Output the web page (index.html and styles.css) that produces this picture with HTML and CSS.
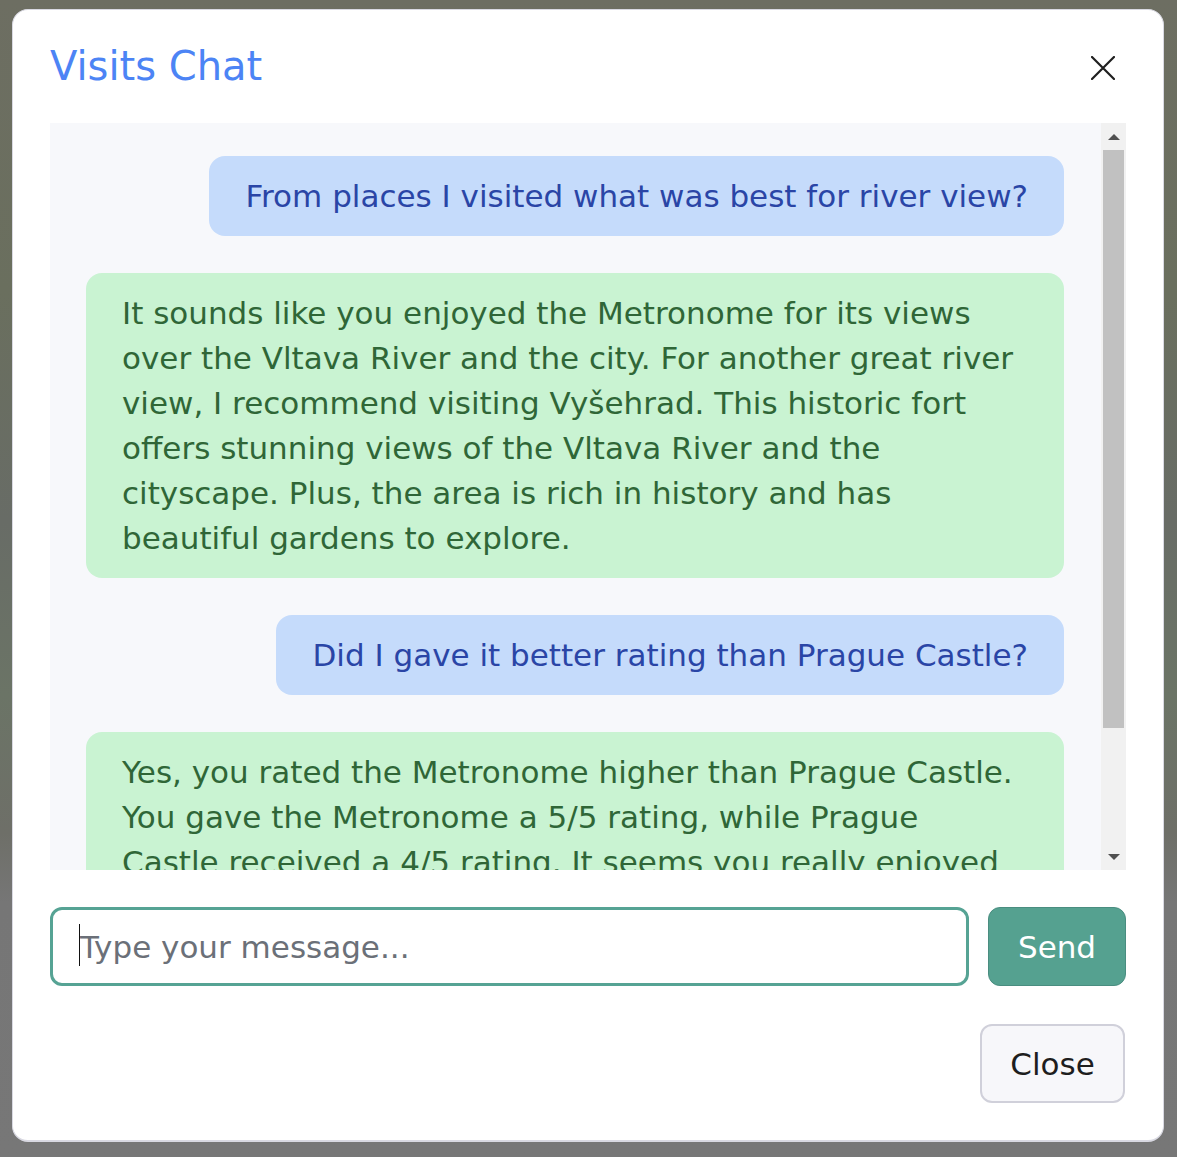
FILE: index.html
```html
<!DOCTYPE html>
<html lang="en">
<head>
<meta charset="utf-8">
<title>Visits Chat</title>
<link rel="stylesheet" href="styles.css">
</head>
<body>
<div class="backdrop">
  <div class="modal">
    <div class="modal-header">
      <h2 class="modal-title">Visits Chat</h2>
      <button class="icon-close" aria-label="Close">
        <svg width="24" height="24" viewBox="0 0 24 24"><path d="M1 1 L23 23 M23 1 L1 23" stroke="#1f1f1f" stroke-width="2.2" stroke-linecap="round" fill="none"/></svg>
      </button>
    </div>
    <div class="chat">
      <div class="messages">
        <div class="msg user">From places I visited what was best for river view?</div>
        <div class="msg bot">It sounds like you enjoyed the Metronome for its views over the Vltava River and the city. For another great river view, I recommend visiting Vyšehrad. This historic fort offers stunning views of the Vltava River and the cityscape. Plus, the area is rich in history and has beautiful gardens to explore.</div>
        <div class="msg user">Did I gave it better rating than Prague Castle?</div>
        <div class="msg bot">Yes, you rated the Metronome higher than Prague Castle. You gave the Metronome a 5/5 rating, while Prague Castle received a 4/5 rating. It seems you really enjoyed your visit to the Metronome and its wonderful views.</div>
      </div>
      <div class="scrollbar">
        <div class="sb-btn"><span class="tri-up"></span></div>
        <div class="sb-track"><div class="sb-thumb"></div></div>
        <div class="sb-btn"><span class="tri-down"></span></div>
      </div>
    </div>
    <div class="composer">
      <div class="composer-field">
        <input class="composer-input" type="text" placeholder="Type your message...">
        <span class="caret"></span>
      </div>
      <button class="btn-send">Send</button>
    </div>
    <div class="modal-footer">
      <button class="btn-close">Close</button>
    </div>
  </div>
</div>
</body>
</html>
```
FILE: styles.css
```css
* { box-sizing: border-box; }
html, body { margin: 0; padding: 0; }
body {
  font-family: "DejaVu Sans", "Liberation Sans", sans-serif;
  width: 1177px;
  height: 1157px;
  overflow: hidden;
  background: linear-gradient(180deg, #6d6e62 0%, #6a6f5e 25%, #686c66 45%, #6b7466 60%, #6e6f68 72%, #767676 78%, #777777 100%);
}
.backdrop {
  padding: 9px 13px 15px 12px;
}
.modal {
  background: #ffffff;
  border: 1px solid #d9d9e2;
  border-bottom-width: 2px;
  border-radius: 16px;
  height: 1133px;
  padding: 32px 37px 37px 37px;
  display: flex;
  flex-direction: column;
}
.modal-header {
  display: flex;
  align-items: center;
  justify-content: space-between;
  height: 48px;
  margin-bottom: 33px;
}
.modal-title {
  margin: 0;
  font-weight: normal;
  font-size: 40px;
  line-height: 48px;
  color: #4c84f5;
}
.icon-close {
  border: 0;
  background: transparent;
  padding: 0;
  margin: 4px 11px 0 0;
  width: 24px;
  height: 24px;
  display: flex;
}
.chat {
  height: 747px;
  background: #f7f8fb;
  display: flex;
  overflow: hidden;
}
.messages {
  flex: 1;
  overflow: hidden;
  padding: 33px 37px 0 36px;
  display: flex;
  flex-direction: column;
  gap: 37px;
}
.msg {
  font-size: 31px;
  line-height: 45px;
  padding: 17.5px 36px;
  border-radius: 16px;
  flex-shrink: 0;
}
.msg.user {
  align-self: flex-end;
  background: #c5dbfb;
  color: #2a45a6;
}
.msg.bot {
  background: #c9f3d2;
  color: #2f6637;
  padding-right: 42px;
}
.scrollbar {
  width: 25px;
  background: #f1f1f1;
  display: flex;
  flex-direction: column;
}
.sb-btn {
  height: 25px;
  display: flex;
  align-items: center;
  justify-content: center;
}
.sb-track {
  flex: 1;
  padding: 2px 2px 0 2px;
}
.sb-thumb {
  height: 578px;
  background: #c1c1c1;
}
.tri-up, .tri-down {
  width: 0;
  height: 0;
  border-left: 6px solid transparent;
  border-right: 6px solid transparent;
}
.tri-up { border-bottom: 6px solid #505050; margin-top: 3px; }
.tri-down { border-top: 6px solid #505050; margin-bottom: 2px; }
.composer {
  margin-top: 37px;
  display: flex;
  gap: 19px;
  height: 79px;
}
.composer-field {
  flex: 1;
  position: relative;
  display: flex;
}
.composer-input {
  flex: 1;
  width: 100%;
  height: 79px;
  border: 3px solid #56a394;
  border-radius: 12px;
  padding: 0 0 0 27px;
  font-family: "DejaVu Sans", "Liberation Sans", sans-serif;
  font-size: 31px;
  color: #222;
  outline: none;
}
.composer-input::placeholder { color: #6b7078; }
.caret {
  position: absolute;
  left: 29px;
  top: 17px;
  width: 1px;
  height: 42px;
  background: #111;
}
.btn-send {
  width: 138px;
  height: 79px;
  background: #55a190;
  border: 1px solid #4a8d80;
  border-radius: 12px;
  color: #ffffff;
  font-family: "DejaVu Sans", "Liberation Sans", sans-serif;
  font-size: 31px;
  padding: 0;
}
.modal-footer {
  margin-top: 38px;
  display: flex;
  justify-content: flex-end;
  padding-right: 1px;
}
.btn-close {
  width: 145px;
  height: 79px;
  background: #f7f7fa;
  border: 2px solid #d0d0da;
  border-radius: 12px;
  color: #1e1e1e;
  font-family: "DejaVu Sans", "Liberation Sans", sans-serif;
  font-size: 31px;
  padding: 0;
}
```
